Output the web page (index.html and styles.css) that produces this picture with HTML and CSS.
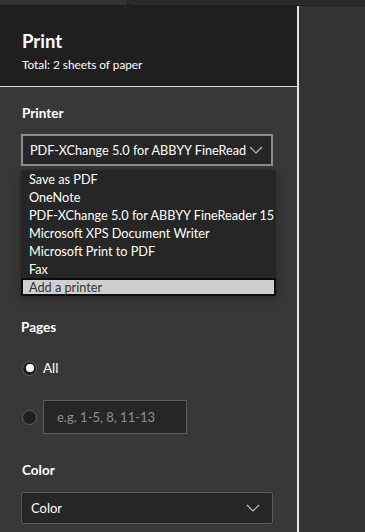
FILE: index.html
```html
<!DOCTYPE html>
<html>
<head>
<meta charset="utf-8">
<link rel="stylesheet" href="styles.css">
</head>
<body>
<div class="topbar"><div class="tab-left"></div><div class="tab-right"></div></div>
<div class="main">
  <div class="panel">
    <header class="head">
      <h1 class="title">Print</h1>
      <div class="subtitle">Total: 2 sheets of paper</div>
    </header>
    <div class="content">
      <section class="printer">
        <div class="label">Printer</div>
        <div class="select-wrap">
          <div class="select select-active">
            <span class="select-text">PDF-XChange 5.0 for ABBYY FineRead</span>
            <svg class="chev" width="14" height="8" viewBox="0 0 14 8"><path d="M1 1 L7 7 L13 1" fill="none" stroke="#bdbdbd" stroke-width="1.2"/></svg>
          </div>
          <ul class="dropdown">
            <li>Save as PDF</li>
            <li>OneNote</li>
            <li>PDF-XChange 5.0 for ABBYY FineReader 15</li>
            <li>Microsoft XPS Document Writer</li>
            <li>Microsoft Print to PDF</li>
            <li>Fax</li>
            <li class="hl">Add a printer</li>
          </ul>
        </div>
      </section>
      <section class="pages">
        <div class="label">Pages</div>
        <div class="radio-row">
          <span class="radio on"></span><span class="radio-label">All</span>
        </div>
        <div class="radio-row range">
          <span class="radio"></span>
          <div class="range-input">e.g. 1-5, 8, 11-13</div>
        </div>
      </section>
      <section class="color">
        <div class="label">Color</div>
        <div class="select">
          <span class="select-text">Color</span>
          <svg class="chev" width="14" height="8" viewBox="0 0 14 8"><path d="M1 1 L7 7 L13 1" fill="none" stroke="#bdbdbd" stroke-width="1.2"/></svg>
        </div>
      </section>
    </div>
  </div>
  <div class="preview"></div>
</div>
</body>
</html>
```
FILE: styles.css
```css
* { box-sizing: border-box; }
html, body { margin: 0; padding: 0; }
body {
  width: 365px;
  height: 532px;
  overflow: hidden;
  background: #333333;
  font-family: "Lato", "Noto Sans", sans-serif;
  color: #ffffff;
}
.topbar {
  height: 6px;
  display: flex;
  background: #1f1f1f;
}
.tab-left {
  width: 127px;
  height: 5px;
  background: #333333;
}
.tab-right {
  flex: 1;
  height: 5px;
  background: #2b2b2b;
  border-bottom-left-radius: 5px;
}
.main {
  display: flex;
  height: 526px;
}
.panel {
  width: 299px;
  border-right: 2px solid #e6e6e6;
  background: #383838;
  display: flex;
  flex-direction: column;
}
.head {
  height: 81px;
  background: #1f1f1f;
  border-bottom: 1px solid #d8d8d8;
  padding: 24px 0 0 22px;
}
.title {
  margin: 0;
  font-size: 18.5px;
  font-weight: 700;
  line-height: 22px;
}
.subtitle {
  margin-top: 6px;
  font-size: 11.8px;
  line-height: 14px;
}
.content {
  padding: 0 0 0 21px;
}
.label {
  font-size: 13.5px;
  font-weight: 700;
  line-height: 18px;
}
.printer { padding-top: 17px; }
.printer .label { padding-left: 1px; }
.select-wrap { position: relative; margin-top: 12px; }
.select {
  width: 252px;
  height: 32px;
  border: 1px solid #5a5a5a;
  border-radius: 2px;
  background: #262626;
  display: flex;
  align-items: center;
  padding: 0 12px 0 9px;
  font-size: 13px;
}
.select-active {
  border: 2px solid #8c8c8c;
  border-radius: 0;
  padding: 0 8px 0 7px;
  font-size: 12.7px;
}
.select-text { white-space: nowrap; overflow: hidden; }
.chev { flex: none; margin-left: auto; }
.dropdown {
  position: absolute;
  left: 0;
  top: 36px;
  width: 255px;
  margin: 0;
  padding: 0;
  list-style: none;
  background: #262626;
  box-shadow: 0 2px 8px rgba(0,0,0,0.35);
}
.dropdown li {
  height: 18px;
  line-height: 18px;
  font-size: 12.7px;
  padding-left: 8px;
  white-space: nowrap;
}
.dropdown li.hl {
  background: #cfcfcf;
  color: #333333;
  border: 2px solid #0d0d0d;
  line-height: 14px;
  padding-left: 6px;
}
.pages { padding-top: 152px; }
.radio-row {
  display: flex;
  align-items: center;
  margin-top: 24px;
  height: 16px;
}
.radio {
  width: 15px;
  height: 15px;
  border-radius: 50%;
  border: 1px solid #5e5e5e;
  background: #1f1f1f;
  display: flex;
  align-items: center;
  justify-content: center;
  margin-left: 1px;
}
.radio.on::after {
  content: "";
  width: 8px;
  height: 8px;
  border-radius: 50%;
  background: #ffffff;
}
.radio-label {
  margin-left: 6px;
  font-size: 13.5px;
}
.range { margin-top: 24px; height: 34px; }
.range-input {
  margin-left: 6px;
  width: 144px;
  height: 34px;
  border: 1px solid #5e5e5e;
  background: #262626;
  color: #8f8f8f;
  font-size: 13px;
  line-height: 32px;
  padding-left: 13px;
}
.color { padding-top: 27px; }
.color .label { padding-left: 1px; }
.color .select { margin-top: 13px; }
.preview { flex: 1; background: #333333; }
```
